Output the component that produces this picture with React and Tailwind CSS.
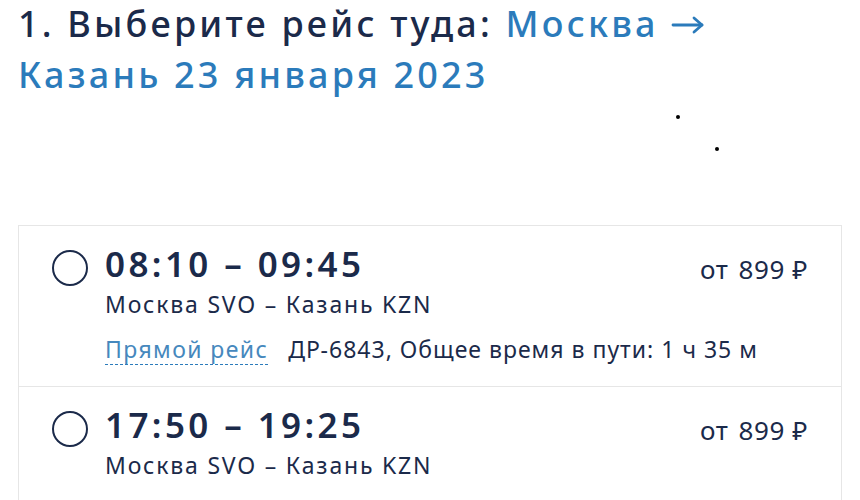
import React from "react";

const flights = [
  { time: "08:10 – 09:45", route: "Москва SVO – Казань KZN", code: "ДР-6843", dur: "1 ч 35 м", price: "899" },
  { time: "17:50 – 19:25", route: "Москва SVO – Казань KZN", code: "ДР-6843", dur: "1 ч 35 м", price: "899" },
];

function Arrow() {
  return (
    <svg width="34" height="20" viewBox="0 0 34 20" className="ml-[12px] inline-block align-[2px]" fill="none" stroke="#2b7bbb" strokeWidth="2.8" strokeLinecap="round" strokeLinejoin="round">
      <path d="M2 10 H31" />
      <path d="M23 3 L31 10 L23 17" />
    </svg>
  );
}

export default function App() {
  return (
    <div className="relative h-[500px] w-[860px] overflow-hidden bg-white px-[18px] pt-[1px] text-[#1b2a4a]" style={{ fontFamily: '"Noto Sans", sans-serif' }}>
      <h1 className="-mt-[3px] whitespace-nowrap text-[36px] font-medium leading-[51px] tracking-[3.2px]">
        1. Выберите рейс туда: <span className="text-[#2b7bbb]">Москва<Arrow /><br />Казань 23 января 2023</span>
      </h1>
      <span className="absolute left-[676px] top-[115px] h-[4px] w-[4px] rounded-full bg-black" />
      <span className="absolute left-[715px] top-[147px] h-[4px] w-[4px] rounded-full bg-black" />
      <div className="mt-[125px] border border-[#e6e6e6]">
        {flights.map((f, i) => (
          <div key={i} className={`flex items-start gap-[17px] pl-[33px] pr-[33px] pt-[18px] pb-[23px] ${i > 0 ? "border-t border-[#e6e6e6]" : ""}`}>
            <div className="mt-[6px] h-[36px] w-[36px] shrink-0 rounded-full border-2 border-[#1b2a4a]" />
            <div className="flex-1 whitespace-nowrap">
              <div className="flex items-start justify-between">
                <div className="text-[35px] font-semibold leading-[40px] tracking-[3.4px]">{f.time}</div>
                <div className="mt-[9px] flex text-[26px] leading-[32px] tracking-[0.6px]">
                  <span>от</span>
                  <span className="ml-[10px]">{f.price} ₽</span>
                </div>
              </div>
              <div className="mt-[5px] text-[23px] leading-[28px] tracking-[1.8px]">{f.route}</div>
              <div className="mt-[17px] flex items-baseline gap-[20px] text-[23px] leading-[28px]">
                <span className="tracking-[1.4px] text-[#4688bd] underline decoration-[#2b7bbb] decoration-dashed decoration-1 underline-offset-[6px]">Прямой рейс</span>
                <span className="tracking-[1px]">{f.code}, Общее время в пути: {f.dur}</span>
              </div>
            </div>
          </div>
        ))}
      </div>
    </div>
  );
}
